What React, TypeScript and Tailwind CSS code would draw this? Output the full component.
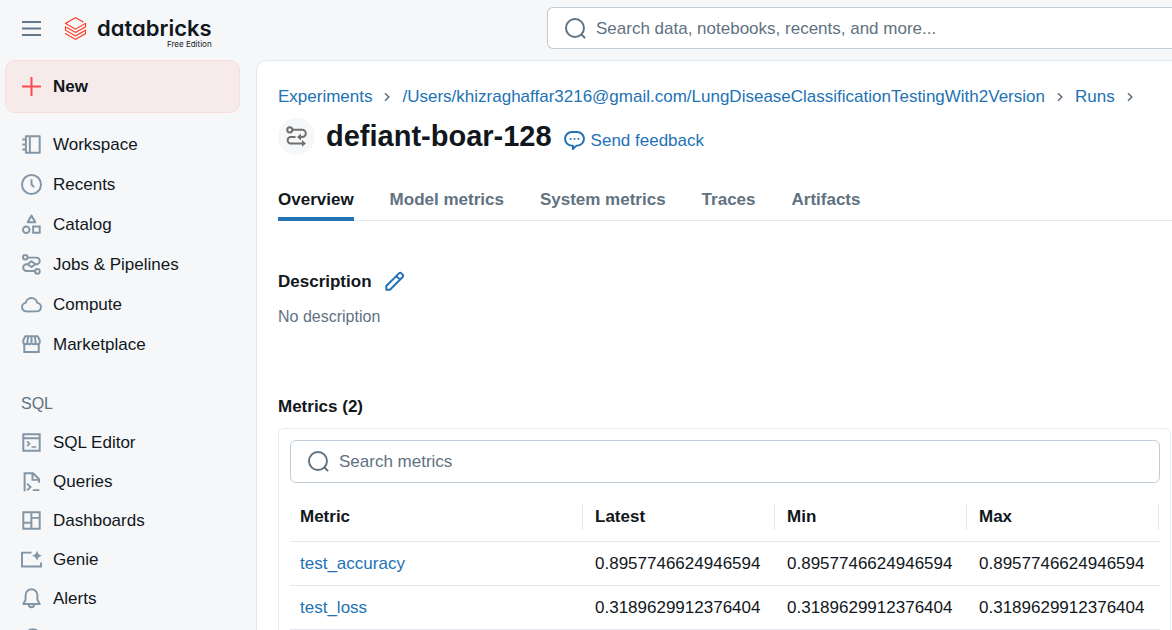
import React from "react";

type IconProps = { className?: string; children: React.ReactNode };

function Icon({ className = "size-[21px] text-[#8396a5]", children }: IconProps) {
  return (
    <svg
      viewBox="0 0 16 16"
      fill="none"
      stroke="currentColor"
      strokeWidth="1.5"
      aria-hidden="true"
      className={`shrink-0 ${className}`}
    >
      {children}
    </svg>
  );
}

const icons = {
  workspace: (
    <Icon>
      <path
        stroke="none"
        fill="currentColor"
        fillRule="evenodd"
        d="M3 1.75A.75.75 0 0 1 3.75 1h10.5a.75.75 0 0 1 .75.75v12.5a.75.75 0 0 1-.75.75H3.75a.75.75 0 0 1-.75-.75V12.5H1V11h2V8.75H1v-1.5h2V5H1V3.5h2zm1.5.75v11H6v-11zm3 0v11h6v-11z"
      />
    </Icon>
  ),
  recents: (
    <Icon>
      <circle cx="8" cy="8" r="7.25" />
      <path d="M8 4v4l2 2" />
    </Icon>
  ),
  catalog: (
    <Icon>
      <path d="M8 1.2 5.1 6.25h5.8z" strokeLinejoin="round" />
      <circle cx="4" cy="12" r="2.5" />
      <path d="M9.25 9.5h5v4.75h-5z" />
    </Icon>
  ),
  jobs: (
    <Icon>
      <circle cx="3.25" cy="2.5" r="1.75" />
      <circle cx="12.5" cy="13.25" r="1.75" />
      <path d="M5 2.75h6.75a2.5 2.5 0 0 1 0 5H11L8 5.5 5 7.75 8 10l3-2.25M5 7.75h-.75a2.6 2.6 0 0 0 0 5.25h6.5" />
    </Icon>
  ),
  compute: (
    <Icon>
      <path d="M4 13.25a3.25 3.25 0 0 1-.4-6.47 4.45 4.45 0 0 1 8.78 0A3.25 3.25 0 0 1 12 13.25z" strokeLinejoin="round" />
    </Icon>
  ),
  marketplace: (
    <Icon>
      <path d="M3.25 1.75h9.5l1.5 3v1.5a1.55 1.55 0 0 1-3.1 0 1.55 1.55 0 0 1-3.15 0 1.55 1.55 0 0 1-3.15 0 1.55 1.55 0 0 1-3.1 0v-1.5z" strokeLinejoin="round" />
      <path d="M2.5 7.5v6.25h11V7.5M4.85 6l.65-4M8 6V2M11.15 6l-.65-4" />
    </Icon>
  ),
  sqlEditor: (
    <Icon>
      <path d="M1.75 1.75h12.5v12.5H1.75zM1.75 4.75h12.5" />
      <path d="m4.6 7.2 2 1.8-2 1.8M8 11.4h3.6" strokeWidth="1.2" />
    </Icon>
  ),
  queries: (
    <Icon>
      <path d="M2.75 15.5V1.75h6.5l4.5 4.5V9M8.75 1.75v5h5" />
      <path d="m4.6 9.6 2.7 2.6-2.7 2.6M9 14.6h5" strokeWidth="1.4" />
    </Icon>
  ),
  dashboards: (
    <Icon>
      <path d="M1.75 1.75h12.5v12.5H1.75zM7.9 1.75v12.5M1.75 9.75H7.9M7.9 6h6.35" />
    </Icon>
  ),
  genie: (
    <Icon>
      <path d="M8 2.75H.75v10.5h14.5V10.2" />
      <path
        stroke="none"
        fill="currentColor"
        d="M12.2 1.4c.9 2.5 1.3 2.9 3.8 3.8-2.500.9-2.900 1.300-3.800 3.800-.9-2.500-1.300-2.900-3.800-3.800 2.500-.9 2.900-1.300 3.800-3.800z"
      />
    </Icon>
  ),
  alerts: (
    <Icon>
      <path d="M3.5 5.500a4.500 4.500 0 0 1 9 0V9l1.750 3.250H1.750L3.500 9z" strokeLinejoin="round" />
      <path d="M6 12.500a2 2.100 0 0 0 4 0" />
    </Icon>
  ),
  history: (
    <Icon>
      <circle cx="9" cy="8" r="6.250" />
      <path d="M9 4.500V8l2.500 1.500" />
    </Icon>
  ),
};

const mainNav = [
  { label: "Workspace", icon: icons.workspace },
  { label: "Recents", icon: icons.recents },
  { label: "Catalog", icon: icons.catalog },
  { label: "Jobs & Pipelines", icon: icons.jobs },
  { label: "Compute", icon: icons.compute },
  { label: "Marketplace", icon: icons.marketplace },
];

const sqlNav = [
  { label: "SQL Editor", icon: icons.sqlEditor },
  { label: "Queries", icon: icons.queries },
  { label: "Dashboards", icon: icons.dashboards },
  { label: "Genie", icon: icons.genie },
  { label: "Alerts", icon: icons.alerts },
  { label: "Query History", icon: icons.history },
];

const tabs = ["Overview", "Model metrics", "System metrics", "Traces", "Artifacts"];

const metrics = [
  { name: "test_accuracy", latest: "0.8957746624946594", min: "0.8957746624946594", max: "0.8957746624946594" },
  { name: "test_loss", latest: "0.3189629912376404", min: "0.3189629912376404", max: "0.3189629912376404" },
];

function SearchIcon() {
  return (
    <Icon className="size-[21px] text-[#5f7281]">
      <circle cx="7.600" cy="7.600" r="6.850" />
      <path d="m12.200 12.200 3.100 3.100" />
    </Icon>
  );
}

function Chevron() {
  return (
    <svg viewBox="0 0 6 10" fill="none" stroke="#5f7281" strokeWidth="1.600" aria-hidden="true" className="h-2.5 w-1.5 shrink-0">
      <path d="m1 1.200 3.800 3.800L1 8.800" />
    </svg>
  );
}

function Header() {
  return (
    <header className="flex h-15 shrink-0 items-center pb-1">
      <div className="flex w-[547px] shrink-0 items-center pl-[21px]">
        <button type="button" aria-label="Toggle navigation" className="mr-[22px]">
          <svg viewBox="0 0 21 21" fill="none" stroke="#64788a" strokeWidth="2" aria-hidden="true" className="block size-[21px]">
            <path d="M1 4h19M1 10.500h19M1 17h19" />
          </svg>
        </button>
        <a href="#home" aria-label="databricks Free Edition" className="flex items-center gap-2.5">
          <svg viewBox="0 0 24 24" fill="#ff3621" aria-hidden="true" className="size-[23px]">
            <path d="M.95 14.184L12 20.403l9.919-5.55v2.21L12 22.662l-10.484-5.96-.565.308v.77L12 24l11.05-6.218v-4.317l-.515-.309L12 19.118l-9.867-5.653v-2.210L12 16.805l11.05-6.218V6.320l-.515-.308L12 11.974 2.647 6.681 12 1.388l7.760 4.368.668-.411v-.566L12 0 .950 6.270v.720L12 13.207l9.919-5.550v2.260L12 15.520 1.516 9.560l-.565.308Z" />
          </svg>
          <span className="flex flex-col items-end pt-2 font-['Inter',sans-serif] text-[#11171c] [font-feature-settings:'cv11']">
            <span className="text-[22px] leading-6 font-semibold">databricks</span>
            <span className="text-[8px] leading-2">Free Edition</span>
          </span>
        </a>
      </div>
      <label className="flex h-[42px] flex-1 items-center gap-2.5 rounded-l-md border border-r-0 border-[#c0cdd8] bg-white pl-[17px]">
        <SearchIcon />
        <input
          type="search"
          aria-label="Search data, notebooks, recents, and more"
          placeholder="Search data, notebooks, recents, and more..."
          className="min-w-0 flex-1 bg-transparent outline-none placeholder:text-[#5f7281]"
        />
      </label>
    </header>
  );
}

function Sidebar() {
  return (
    <aside className="w-64 shrink-0 overflow-hidden">
      <button
        type="button"
        className="ml-[5px] flex h-[53px] w-[235px] items-center gap-[11px] rounded-[10px] border border-[#fadcdc] bg-[#f7eaea] pl-[15px] font-bold"
      >
        <svg viewBox="0 0 21 21" stroke="#ff4a50" strokeWidth="2" aria-hidden="true" className="size-[21px]">
          <path d="M10.500 1v19M1 10.500h19" />
        </svg>
        New
      </button>
      <nav aria-label="Main" className="pt-[11px]">
        {mainNav.map((item) => (
          <a key={item.label} href="#nav" className="flex h-10 items-center gap-[11px] pl-[21px]">
            {item.icon}
            {item.label}
          </a>
        ))}
      </nav>
      <h2 className="mt-7 h-[23px] pl-[21px] text-[16px] text-[#5f7281]">SQL</h2>
      <nav aria-label="SQL" className="pt-2">
        {sqlNav.map((item) => (
          <a key={item.label} href="#sql" className="flex h-[39px] items-center gap-[11px] pl-[21px]">
            {item.icon}
            {item.label}
          </a>
        ))}
      </nav>
    </aside>
  );
}

function MetricsTable() {
  return (
    <div className="mr-px rounded-md border border-[#e8ecf0] p-[11px] pr-2.5">
      <label className="flex h-[43px] items-center gap-2.5 rounded-md border border-[#c0cdd8] pl-[17px]">
        <SearchIcon />
        <input
          type="search"
          aria-label="Search metrics"
          placeholder="Search metrics"
          className="min-w-0 flex-1 bg-transparent outline-none placeholder:text-[#5f7281]"
        />
      </label>
      <table className="mt-2.5 w-full table-fixed border-collapse text-left">
        <thead>
          <tr className="h-12 border-b border-[#e4e8ec]">
            {["Metric", "Latest", "Min", "Max"].map((name, i) => (
              <th key={name} scope="col" className={i === 0 ? "p-0 font-bold" : "w-48 p-0 font-bold"}>
                <div
                  className={
                    i === 0
                      ? "mr-px flex h-[27px] items-center border-r border-[#e4e8ec] pl-2.5"
                      : "mr-px flex h-[27px] items-center border-r border-[#e4e8ec] pl-[11px]"
                  }
                >
                  {name}
                </div>
              </th>
            ))}
          </tr>
        </thead>
        <tbody>
          {metrics.map((m) => (
            <tr key={m.name} className="h-11 border-b border-[#e4e8ec]">
              <td className="p-0 pl-2.5">
                <a href="#metric" className="text-[#2272b4]">{m.name}</a>
              </td>
              <td className="p-0 pl-[11px]">{m.latest}</td>
              <td className="p-0 pl-[11px]">{m.min}</td>
              <td className="p-0 pl-[11px]">{m.max}</td>
            </tr>
          ))}
        </tbody>
      </table>
    </div>
  );
}

export default function App() {
  return (
    <div className="flex h-screen flex-col overflow-hidden bg-[#f6f7f9] font-['Liberation_Sans',Arial,sans-serif] text-[17px] leading-[23px] text-[#11171c]">
      <Header />
      <div className="flex min-h-0 flex-1">
        <Sidebar />
        <main className="min-w-0 flex-1 overflow-hidden rounded-tl-[10px] border-t border-l border-[#e4e9ee] bg-white pt-6 pl-[21px]">
          <nav aria-label="Breadcrumb" className="flex items-center gap-3 whitespace-nowrap text-[#2272b4]">
            <a href="#experiments">Experiments</a>
            <Chevron />
            <a href="#experiment">/Users/khizraghaffar3216@gmail.com/LungDiseaseClassificationTestingWith2Version</a>
            <Chevron />
            <a href="#runs">Runs</a>
            <Chevron />
          </nav>
          <div className="mt-2.5 flex h-9 items-center">
            <span className="flex size-[37px] shrink-0 items-center justify-center rounded-full bg-[#f6f7f9]">
              <svg viewBox="0 0 21 21" fill="none" stroke="#6f6f6f" strokeWidth="2" aria-hidden="true" className="size-[21px]">
                <circle cx="3.800" cy="3.800" r="2.600" />
                <path d="M6.500 3.800h9.700a3.600 3.600 0 0 1 0 7.200H13.500M9.500 11H4.800a3.200 3.200 0 0 0 0 6.400H17" />
                <path d="M15 7.600v6.800L11 11zM16 14v6.800l4-3.400z" fill="#6f6f6f" stroke="none" />
              </svg>
            </span>
            <h1 className="ml-[11px] text-[29px] leading-9 font-bold">defiant-boar-128</h1>
            <a href="#feedback" className="mt-2 ml-3 flex items-center gap-1.5 text-[#2272b4]">
              <Icon className="size-[21px]">
                <path d="M6 1.500h4a5.200 5.200 0 0 1 0 10.400h-.500L6.800 14.500v-2.600H6a5.200 5.200 0 0 1 0-10.400z" strokeLinejoin="round" />
                <path d="M4.400 6.750h1.300M7.350 6.750h1.300M10.300 6.750h1.300" strokeWidth="1.300" />
              </Icon>
              Send feedback
            </a>
          </div>
          <div role="tablist" className="mt-8 flex h-[35px] gap-9 border-b border-[#e4e9ee]">
            {tabs.map((tab, i) => (
              <button
                key={tab}
                type="button"
                role="tab"
                aria-selected={i === 0}
                className={
                  i === 0
                    ? "h-[35px] border-b-4 border-[#2272b4] pb-1 font-bold"
                    : "h-[35px] pb-2 font-bold text-[#5f7281]"
                }
              >
                {tab}
              </button>
            ))}
          </div>
          <section className="mt-[49px]">
            <div className="flex items-center gap-3">
              <h2 className="font-bold">Description</h2>
              <button type="button" aria-label="Edit description" className="text-[#2272b4]">
                <Icon className="block size-[21px]">
                  <path d="M1.750 14.250v-2.800L11.400 1.800a1.300 1.300 0 0 1 1.850 0l.95.95a1.300 1.300 0 0 1 0 1.850L4.550 14.250zM9.400 3.800l2.800 2.800" strokeLinejoin="round" />
                </Icon>
              </button>
            </div>
            <p className="mt-3 text-[16px] text-[#5f7281]">No description</p>
          </section>
          <section className="mt-[67px]">
            <h2 className="mb-2.5 font-bold">Metrics (2)</h2>
            <MetricsTable />
          </section>
        </main>
      </div>
    </div>
  );
}
